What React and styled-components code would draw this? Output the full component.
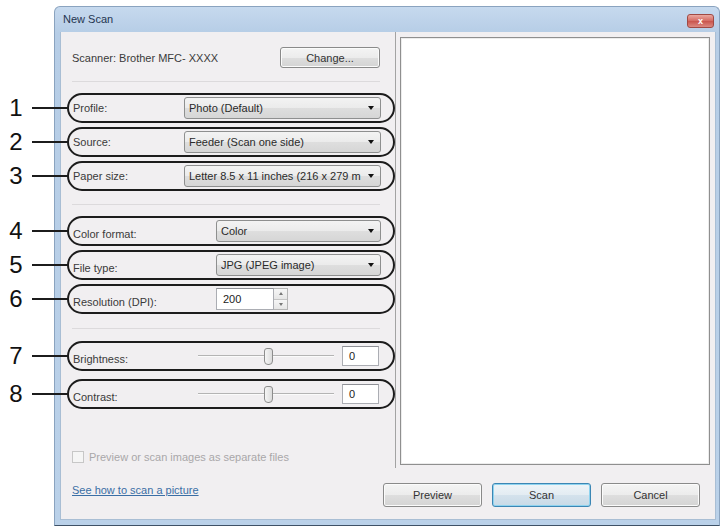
import React from 'react';
import styled, { createGlobalStyle } from 'styled-components';

const Global = createGlobalStyle`
  html, body { margin: 0; padding: 0; background: #ffffff; }
  body { font-family: "Liberation Sans", Arial, sans-serif; font-size: 11px; color: #3a3a3a; }
  * { box-sizing: border-box; }
`;

const Page = styled.div`
  width: 726px;
  height: 528px;
  padding: 6px 6px 0 54px;
`;

const Window = styled.div`
  width: 666px;
  height: 520px;
  border: 1px solid #8aa3bf;
  border-bottom-color: #3e5166;
  border-radius: 6px 6px 0 0;
  background: linear-gradient(#c6d9ee, #b6cde6 26px, #bad1e9);
  display: flex;
  flex-direction: column;
  padding: 0 3px 5px 5px;
`;

const TitleBar = styled.div`
  height: 25px;
  display: flex;
  align-items: center;
  justify-content: space-between;
  padding: 0 2px 0 3px;
`;

const Title = styled.span`
  font-size: 11px;
  color: #1f3550;
  margin-top: -2px;
`;

const CloseButton = styled.div`
  width: 27px;
  height: 14px;
  margin-top: 3px;
  border: 1px solid #a04a44;
  border-radius: 3px;
  background: linear-gradient(#eaa8a0, #d46a62 50%, #c9544c 51%, #dc8a82);
  color: #fff;
  font-size: 9px;
  font-weight: bold;
  line-height: 12px;
  text-align: center;
`;

const Content = styled.div`
  flex: 1;
  background: #f1eff1;
  display: flex;
  flex-direction: column;
  border: 1px solid #a9bed4;
  border-top: none;
`;

const Top = styled.div`
  height: 436px;
  display: flex;
`;

const LeftPanel = styled.div`
  width: 335px;
  border-right: 1px solid #a3a3a3;
  padding: 15px 15px 5px 11px;
  display: flex;
  flex-direction: column;
`;

const ScannerRow = styled.div`
  height: 21px;
  display: flex;
  align-items: center;
  justify-content: space-between;
`;

const PushButton = styled.div`
  width: ${p => p.$w || 99}px;
  height: ${p => p.$h || 24}px;
  border: 1px solid ${p => (p.$default ? '#3c86b4' : '#8a8a8a')};
  border-radius: 3px;
  background: ${p => (p.$default
    ? 'linear-gradient(#eef4f8, #e3ecf2 50%, #d4e2ec 51%, #c8dae7)'
    : 'linear-gradient(#f4f4f4, #ececec 50%, #dedede 51%, #d4d4d4)')};
  box-shadow: ${p => (p.$default ? 'inset 0 0 0 1px #8ed3ef' : 'inset 0 0 0 1px #fbfbfb')};
  display: flex;
  align-items: center;
  justify-content: center;
  color: #333;
  font-size: 11px;
`;

const Separator = styled.div`
  height: 1px;
  background: #dcdadc;
  margin-top: ${p => p.$mt}px;
`;

const Group = styled.div`
  display: flex;
  flex-direction: column;
  gap: ${p => p.$gap}px;
  margin-top: ${p => p.$mt}px;
`;

const Oval = styled.div`
  position: relative;
  height: 30px;
  margin: 0 -15px 0 -5px;
  border: 2px solid #1c1c1c;
  border-radius: 15px;
  padding-left: 4px;
  display: flex;
  align-items: center;
`;

const Callout = styled.div`
  position: absolute;
  right: 100%;
  top: 50%;
  transform: translateY(-50%);
  width: 62px;
  display: flex;
  align-items: center;
`;

const CalloutNumber = styled.span`
  width: 18px;
  text-align: center;
  font-family: "Liberation Sans", Arial, sans-serif;
  font-size: 24px;
  line-height: 24px;
  color: #111;
`;

const CalloutLine = styled.span`
  flex: 1;
  height: 2px;
  margin-left: 7px;
  background: #1c1c1c;
`;

const Label = styled.span`
  width: ${p => p.$w}px;
  flex: none;
  color: #3a3a3a;
  margin-top: ${p => (p.$low ? 6 : 0)}px;
`;

const Dropdown = styled.div`
  width: ${p => p.$w}px;
  height: 22px;
  border: 1px solid #8e8f8f;
  border-radius: 3px;
  background: linear-gradient(#f3f3f3, #ebebeb 50%, #dedede 51%, #d6d6d6);
  display: flex;
  align-items: center;
  padding: 0 6px 0 4px;
  gap: 4px;
`;

const DropText = styled.span`
  flex: 1;
  white-space: nowrap;
  overflow: hidden;
  color: #2a2a2a;
`;

const Arrow = styled.span`
  flex: none;
  width: 0;
  height: 0;
  border-left: 3.5px solid transparent;
  border-right: 3.5px solid transparent;
  border-top: 4px solid #111;
`;

const TextBox = styled.div`
  width: ${p => p.$w}px;
  height: ${p => p.$h || 22}px;
  border: 1px solid #abadb3;
  border-top-color: #8e9096;
  background: #fff;
  display: flex;
  align-items: center;
  padding-left: 6px;
  color: #222;
  margin-left: ${p => p.$ml || 0}px;
`;

const Spinner = styled.div`
  width: 14px;
  height: 22px;
  display: flex;
  flex-direction: column;
  border: 1px solid #b5b5b5;
  border-left: none;
`;

const SpinHalf = styled.div`
  flex: 1;
  display: flex;
  align-items: center;
  justify-content: center;
  background: linear-gradient(#f6f6f6, #e6e6e6);
  & + & { border-top: 1px solid #c4c4c4; }
`;

const SpinArrow = styled.span`
  width: 0;
  height: 0;
  border-left: 2.5px solid transparent;
  border-right: 2.5px solid transparent;
  ${p => (p.$up ? 'border-bottom: 3px solid #777;' : 'border-top: 3px solid #777;')}
`;

const Slider = styled.div`
  width: 136px;
  height: 20px;
  display: flex;
  align-items: center;
`;

const Track = styled.span`
  height: 2px;
  ${p => (p.$w ? `width: ${p.$w}px;` : 'flex: 1;')}
  border-top: 1px solid #b4b4b4;
  border-bottom: 1px solid #fbfbfb;
`;

const Thumb = styled.span`
  flex: none;
  width: 9px;
  height: 17px;
  border: 1px solid #8d8d8d;
  border-radius: 3px 3px 4px 4px;
  background: linear-gradient(90deg, #f5f5f5, #dcdcdc);
`;

const CheckRow = styled.div`
  margin-top: auto;
  display: flex;
  align-items: center;
  gap: 5px;
  color: #a9a7a9;
`;

const CheckBox = styled.span`
  width: 12px;
  height: 12px;
  border: 1px solid #c7c7c7;
  background: #f5f5f5;
`;

const PreviewArea = styled.div`
  flex: 1;
  padding: 5px 5px 3px 4px;
  display: flex;
`;

const PreviewBox = styled.div`
  flex: 1;
  background: #fff;
  border: 1px solid #8f8f8f;
  box-shadow: inset 0 0 0 1px #ececec;
`;

const Bottom = styled.div`
  flex: 1;
  display: flex;
  align-items: center;
  padding: 0 15px 0 11px;
`;

const Link = styled.span`
  color: #3a6ea5;
  text-decoration: underline;
  margin-bottom: 8px;
`;

const Buttons = styled.div`
  margin-left: auto;
  display: flex;
  gap: 10px;
  margin-top: 2px;
`;

const comboRows = [
  { n: 1, label: 'Profile:', value: 'Photo (Default)' },
  { n: 2, label: 'Source:', value: 'Feeder (Scan one side)' },
  { n: 3, label: 'Paper size:', value: 'Letter 8.5 x 11 inches (216 x 279 m' },
];

function Number({ n }) {
  return (
    <Callout>
      <CalloutNumber>{n}</CalloutNumber>
      <CalloutLine />
    </Callout>
  );
}

function SliderRow({ n, label }) {
  return (
    <Oval>
      <Number n={n} />
      <Label $w={125} $low>{label}</Label>
      <Slider>
        <Track $w={66} />
        <Thumb />
        <Track />
      </Slider>
      <TextBox $w={37} $h={20} $ml={8}>0</TextBox>
    </Oval>
  );
}

export default function App() {
  return (
    <>
      <Global />
      <Page>
        <Window>
          <TitleBar>
            <Title>New Scan</Title>
            <CloseButton>x</CloseButton>
          </TitleBar>
          <Content>
            <Top>
              <LeftPanel>
                <ScannerRow>
                  <span>Scanner: Brother MFC- XXXX</span>
                  <PushButton $w={100} $h={21}>Change...</PushButton>
                </ScannerRow>
                <Separator $mt={13} />
                <Group $gap={4} $mt={11}>
                  {comboRows.map(r => (
                    <Oval key={r.n}>
                      <Number n={r.n} />
                      <Label $w={111}>{r.label}</Label>
                      <Dropdown $w={197}>
                        <DropText>{r.value}</DropText>
                        <Arrow />
                      </Dropdown>
                    </Oval>
                  ))}
                </Group>
                <Separator $mt={13} />
                <Group $gap={4} $mt={11}>
                  <Oval>
                    <Number n={4} />
                    <Label $w={143} $low>Color format:</Label>
                    <Dropdown $w={165}>
                      <DropText>Color</DropText>
                      <Arrow />
                    </Dropdown>
                  </Oval>
                  <Oval>
                    <Number n={5} />
                    <Label $w={143} $low>File type:</Label>
                    <Dropdown $w={165}>
                      <DropText>JPG (JPEG image)</DropText>
                      <Arrow />
                    </Dropdown>
                  </Oval>
                  <Oval>
                    <Number n={6} />
                    <Label $w={143} $low>Resolution (DPI):</Label>
                    <TextBox $w={58}>200</TextBox>
                    <Spinner>
                      <SpinHalf><SpinArrow $up /></SpinHalf>
                      <SpinHalf><SpinArrow /></SpinHalf>
                    </Spinner>
                  </Oval>
                </Group>
                <Separator $mt={14} />
                <Group $gap={8} $mt={12}>
                  <SliderRow n={7} label="Brightness:" />
                  <SliderRow n={8} label="Contrast:" />
                </Group>
                <CheckRow>
                  <CheckBox />
                  <span>Preview or scan images as separate files</span>
                </CheckRow>
              </LeftPanel>
              <PreviewArea>
                <PreviewBox />
              </PreviewArea>
            </Top>
            <Bottom>
              <Link>See how to scan a picture</Link>
              <Buttons>
                <PushButton>Preview</PushButton>
                <PushButton $default>Scan</PushButton>
                <PushButton>Cancel</PushButton>
              </Buttons>
            </Bottom>
          </Content>
        </Window>
      </Page>
    </>
  );
}
